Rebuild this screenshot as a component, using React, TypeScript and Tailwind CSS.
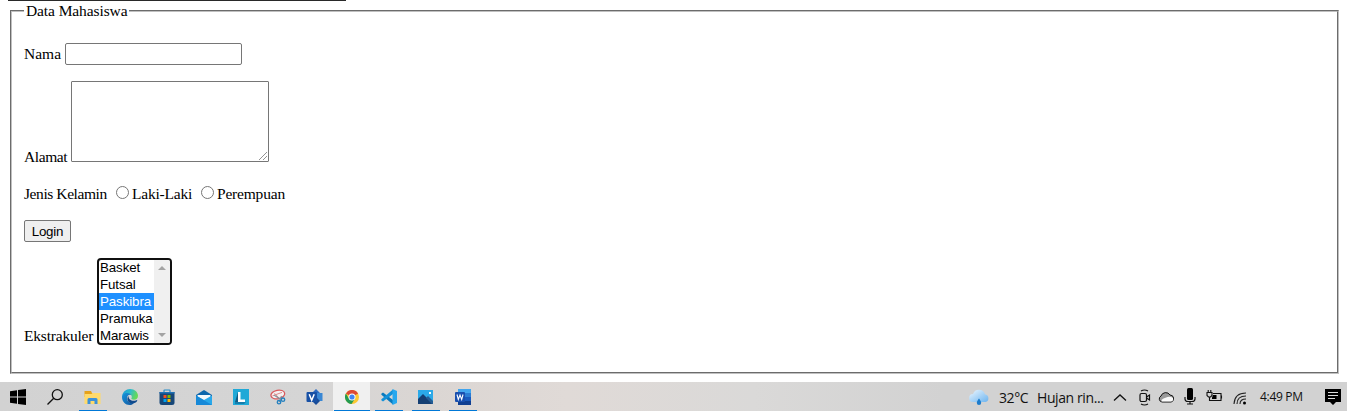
import React, { useState } from "react";

const activities = ["Basket", "Futsal", "Paskibra", "Pramuka", "Marawis"];

function Gender({ label, className }: { label: string; className: string }) {
  return (
    <label className={`flex h-[18px] items-start ${className}`}>
      <input
        type="radio"
        name="gender"
        className="mt-px mr-[3px] size-[13px] shrink-0 appearance-none rounded-full border border-[#767676] bg-white checked:border-4"
      />
      <span className="leading-[18px] tracking-[-0.2px]">{label}</span>
    </label>
  );
}

function ActivityList() {
  const [selected, setSelected] = useState("Paskibra");
  return (
    <div className="flex h-[87px] w-[75px] rounded-[4px] border-2 border-[#101010] bg-white">
      <ul role="listbox" className="-mt-px w-[55px] font-['Liberation_Sans',Arial,sans-serif] text-[13.333px] leading-[17px] tracking-[-0.1px]">
        {activities.map((name) => (
          <li
            key={name}
            role="option"
            aria-selected={name === selected}
            onClick={() => setSelected(name)}
            className={
              name === selected
                ? "h-[17px] bg-[#1e90ff] pl-px whitespace-nowrap text-white"
                : "h-[17px] pl-px whitespace-nowrap text-black"
            }
          >
            {name}
          </li>
        ))}
      </ul>
      <div className="flex flex-1 flex-col items-center justify-between rounded-r-[2px] bg-[#f0f0f0] py-[6px]">
        <svg width="8" height="4" viewBox="0 0 8 4" fill="#a3a3a3"><path d="M0 4 4 0l4 4z" /></svg>
        <svg width="8" height="4" viewBox="0 0 8 4" fill="#a3a3a3"><path d="M0 0h8L4 4z" /></svg>
      </div>
    </div>
  );
}

function Tile({ children, state = "idle" }: { children: React.ReactNode; state?: "idle" | "open" | "active" }) {
  return (
    <div className={state === "active" ? "flex h-full w-[37px] flex-col items-center bg-[#f0f0f0]" : "flex h-full w-[37px] flex-col items-center"}>
      <div className="flex h-[28px] items-center pt-[2px]">{children}</div>
      {state !== "idle" && (
        <div className={state === "active" ? "h-px w-[36px] bg-[#0078d7]" : "h-px w-[28px] bg-[#0078d7]"} />
      )}
    </div>
  );
}

function StartIcon() {
  return (
    <svg width="16" height="16" viewBox="0 0 16 16" fill="#000">
      <path d="M0 2.2 7 1.2v6.3H0zM8 1l8-1v7.5H8zM0 8.5h7v6.3l-7-1zM8 8.5h8V16l-8-1z" />
    </svg>
  );
}

function SearchIcon() {
  return (
    <svg width="16" height="16" viewBox="0 0 16 16" fill="none" stroke="#111" strokeWidth="1.3">
      <circle cx="10.3" cy="5.7" r="5" /><path d="M6.7 9.3.5 15.5" />
    </svg>
  );
}

function FolderIcon() {
  return (
    <svg width="17" height="15" viewBox="0 0 17 15">
      <path d="M.5 1h6.500l1 2h8v4H.5z" fill="#e6a21b" /><path d="M.5 4h7l1-1H16.500v11H.5z" fill="#ffda6b" />
      <path d="M3.500 14V9.500Q3.500 8 5 8h7Q13.500 8 13.500 9.500V14h-3v-3h-4v3z" fill="#3c91d9" />
    </svg>
  );
}

function EdgeIcon() {
  return (
    <svg width="16" height="16" viewBox="0 0 16 16">
      <defs>
        <linearGradient id="edgeTop" x1="0" y1="0" x2="1" y2="0.3"><stop stopColor="#1696dc" /><stop offset=".55" stopColor="#30bdc8" /><stop offset="1" stopColor="#65d957" /></linearGradient>
        <linearGradient id="edgeBottom" x1="0" y1="0" x2="1" y2="1"><stop stopColor="#1695dd" /><stop offset="1" stopColor="#12549c" /></linearGradient>
      </defs>
      <path d="M.1 7C.7 3 4 0 8 0c4.7 0 8 3.3 8 6.7 0 2.5-1.8 4-4 4-2 0-3-.8-2.6-1.4 1-1.5.1-4.3-3.2-4.3C3 5 .6 6.4.1 7z" fill="url(#edgeTop)" />
      <path d="M0 8c0-2 2.2-4 5-4 2 0 3.6.8 4.4 2C6.7 5 5 7 5 9.4c0 3.6 3.6 5.2 7.2 4C11 15 9.6 16 7.6 16 3.4 16 0 12.5 0 8z" fill="url(#edgeBottom)" />
      <path d="M6.5 7C4 9.5 5.8 15 11 14.4c2.2-.3 3.6-1.5 4.2-2.7.3-.6-.2-.8-.7-.5C10.5 13 6.4 11 6.5 7z" fill="#104a8c" />
    </svg>
  );
}

function StoreIcon() {
  return (
    <svg width="16" height="16" viewBox="0 0 16 16">
      <path d="M5 4V1.6Q5 1 5.6 1h4.8q.6 0 .6.6V4" fill="none" stroke="#258bc9" strokeWidth="1.2" />
      <path d="M.5 3h15v10.5Q15.5 16 13 16H3Q.5 16 .5 13.5z" fill="#174778" /><path d="M.5 3h15v1.5H.5z" fill="#1d70b4" />
      <path d="M4.500 6h3v3h-3z" fill="#f25022" /><path d="M8.500 6h3v3h-3z" fill="#7fba00" /><path d="M4.500 10h3v3h-3z" fill="#00a4ef" /><path d="M8.500 10h3v3h-3z" fill="#ffb900" />
    </svg>
  );
}

function MailIcon() {
  return (
    <svg width="16" height="15" viewBox="0 0 16 15">
      <path d="M0 5 8 0l8 5v10H0z" fill="#0c66ac" /><path d="M1.500 5h13v3L8 11 1.500 8z" fill="#f4f8fb" />
      <path d="M0 5.500 8 10l8-4.500V15H0z" fill="#28a8ea" /><path d="M0 5.500 16 15H0z" fill="#1689d8" />
    </svg>
  );
}

function LIcon() {
  return (
    <svg width="16" height="16" viewBox="0 0 16 16">
      <path d="M0 0h16v16H0z" fill="#20a9d7" /><path d="M5 3 2 13h3z" fill="#125b83" /><path d="M2 13h11l-2 2H2z" fill="#167eac" /><path d="M5 3h2.500v7.500H12V13H5z" fill="#fff" />
    </svg>
  );
}

function SnipIcon() {
  return (
    <svg width="17" height="16" viewBox="0 0 17 16" fill="none">
      <ellipse cx="8.8" cy="5.5" rx="7" ry="4.3" transform="rotate(-12 8.8 5.5)" fill="#f4f1f1" stroke="#d9595b" strokeWidth="1.3" />
      <path d="m3.500 6.800 9.500-3.400M5.500 4.300 10 9" stroke="#df8b8b" />
      <path d="m5 6 7.500 5M12.500 7l-2 6" stroke="#85939b" strokeWidth="1.2" />
      <circle cx="10" cy="13.200" r="1.700" stroke="#2681bf" strokeWidth="1.400" /><circle cx="14" cy="10.700" r="1.700" stroke="#2681bf" strokeWidth="1.400" />
    </svg>
  );
}

function VisioIcon() {
  return (
    <svg width="17" height="16" viewBox="0 0 17 16">
      <path d="m10 0 4 4-4 4-4-4z" fill="#2b6bc2" /><path d="M11 4h5.500v8H11z" fill="#3987d4" /><path d="m10 8 4 4-4 4-4-4z" fill="#174b98" />
      <rect x="0.500" y="3" width="10.500" height="10" rx="1" fill="#1750a5" /><path d="m3.200 5.300 2.500 6 2.500-6" fill="none" stroke="#fff" strokeWidth="1.5" />
    </svg>
  );
}

function ChromeIcon() {
  return (
    <svg width="14" height="14" viewBox="0 0 14 14">
      <circle cx="7" cy="7" r="7" fill="#fcc934" /><path d="M7 7 .9 3.500A7 7 0 0 1 13.100 3.500z" fill="#de4936" />
      <path d="M.9 3.500A7 7 0 0 0 6.500 14L10 8.800H4z" fill="#249b51" /><circle cx="7" cy="7" r="3.500" fill="#fff" /><circle cx="7" cy="7" r="2.600" fill="#4285f4" />
    </svg>
  );
}

function CodeIcon() {
  return (
    <svg width="16" height="16" viewBox="0 0 16 16">
      <path d="M.3 4.800 2 3.500 12 11v4.500L.4 5.700z" fill="#087abf" /><path d="M.3 11.200 2 12.500 12 5V.5L.4 10.300z" fill="#1491d8" />
      <path d="m11.500 0 4.500 2v12l-4.500 2z" fill="#28a8ee" />
    </svg>
  );
}

function PhotosIcon() {
  return (
    <svg width="15" height="14" viewBox="0 0 15 14">
      <path d="M0 0h15v14H0z" fill="#2ba9e8" /><path d="M0 9 5 4l10 10H0z" fill="#153f73" /><path d="m8 8 2-2 5 5v3h-1z" fill="#245d95" /><path d="M11 2h2v2h-2z" fill="#f5fbff" />
    </svg>
  );
}

function WordIcon() {
  return (
    <svg width="16" height="16" viewBox="0 0 16 16">
      <path d="M3 0h13v4H3z" fill="#41a5ee" /><path d="M3 4h13v4H3z" fill="#2b7cd3" /><path d="M3 8h13v4H3z" fill="#185abd" /><path d="M3 12h13v4H3z" fill="#103f91" />
      <rect y="3" width="10" height="10" rx="1" fill="#194fae" /><path d="m2 5.500 1.300 5L5 6l1.700 4.500L8 5.500" fill="none" stroke="#fff" strokeWidth="1.1" />
    </svg>
  );
}

function WeatherIcon() {
  return (
    <svg width="21" height="17" viewBox="0 0 21 17">
      <defs><linearGradient id="cloud" x1="0" y1="0" x2="1" y2="1"><stop stopColor="#edf7ff" /><stop offset="1" stopColor="#6cb4ef" /></linearGradient></defs>
      <path d="M4.300 13A4 4 0 0 1 4 5 6.300 6.300 0 0 1 16 5.200 4 4 0 0 1 16.500 13z" fill="url(#cloud)" />
      <path d="M10 9.500c1 1.500 2.200 3 2.200 4.200a2.200 2.200 0 0 1-4.400 0C7.800 12.500 9 11 10 9.500z" fill="#1c7ccc" />
    </svg>
  );
}

function Taskbar() {
  return (
    <footer className="flex h-[29px] items-center bg-[linear-gradient(90deg,#d2d2d2_0%,#d5d5d5_23%,#dbd6d3_32%,#e0dad7_42%,#dad9d8_56%,#d2d2d2_70%)] font-['Open_Sans','Noto_Sans',sans-serif] text-[#111]">
      <nav className="flex h-full">
        <div className="-ml-px flex h-full w-[75px]"><Tile><StartIcon /></Tile><Tile><SearchIcon /></Tile></div>
        <Tile state="open"><FolderIcon /></Tile>
        <Tile><EdgeIcon /></Tile>
        <Tile><StoreIcon /></Tile>
        <Tile><MailIcon /></Tile>
        <Tile><LIcon /></Tile>
        <Tile><SnipIcon /></Tile>
        <Tile><VisioIcon /></Tile>
        <Tile state="active"><ChromeIcon /></Tile>
        <Tile state="open"><CodeIcon /></Tile>
        <Tile state="open"><PhotosIcon /></Tile>
        <Tile state="open"><WordIcon /></Tile>
      </nav>
      <div className="ml-[488px] flex h-full items-center pt-[2px]">
        <WeatherIcon />
        <span className="ml-[9px] w-[38px] text-[14px] tracking-[-0.4px] whitespace-nowrap">32°C</span>
        <span className="w-[77px] text-[14px] tracking-[-0.4px] whitespace-nowrap">Hujan rin...</span>
        <svg className="-ml-px" width="14" height="10" viewBox="0 0 14 10" fill="none" stroke="#111" strokeWidth="1.3"><path d="M1 7.500 7 2l6 5.500" /></svg>
        <svg className="ml-[11px]" width="13" height="17" viewBox="0 0 13 17" fill="none" stroke="#111" strokeWidth="1.2">
          <rect x="2" y="4.500" width="6.500" height="8" rx="1.500" /><path d="m8.500 8 3-2v5l-3-2M3 2q3.500-2 7 0M3 15q3.500 2 7 0" />
        </svg>
        <svg className="ml-[7px] -translate-y-px" width="17" height="12" viewBox="0 0 17 12" stroke="#111">
          <path d="M4 11A3.200 3.200 0 0 1 3 5 5 5 0 0 1 12 4a3.600 3.600 0 0 1 1.200 7z" fill="#999" />
          <path d="M3.500 10.500Q3 8.500 5.500 7.500l4-1.500q3-.8 5.500 1 .8 3-2 3.500z" fill="#fafafa" stroke="none" />
        </svg>
        <svg className="ml-[9px] -translate-y-px" width="12" height="17" viewBox="0 0 12 17" fill="none" stroke="#111" strokeWidth="1.2">
          <rect x="3" y="0" width="6" height="12" rx="1.5" fill="#000" stroke="none" /><path d="M1 9v2q0 2.500 3 2.500h4q3 0 3-2.500V9M6 13v3M3 16h6" />
        </svg>
        <svg className="ml-[10px] -translate-y-px" width="17" height="13" viewBox="0 0 17 13" fill="none" stroke="#111" strokeWidth="1.1">
          <path d="M7 3.500h8v7H4.500M15.500 5.500v3M1 2.500h5v3L4.500 7h-2L1 5.500zM2.200 0v2M4.800 0v2M3.500 7v3.500H5" /><path d="M7 5h3.500v4H6V7.500z" fill="#000" stroke="none" />
        </svg>
        <svg className="ml-[10px]" width="15" height="14" viewBox="0 0 15 14" fill="none" stroke="#222" strokeWidth="1.1">
          <path d="M1 13Q1.500 2 13 2M4 13Q4 5 13 5M7 13q0-5 6-5" /><circle cx="11.500" cy="12" r="1.5" fill="#000" stroke="none" />
        </svg>
        <span className="ml-[12px] w-[65px] -translate-y-px text-[12px] tracking-[-0.3px] whitespace-nowrap">4:49 PM</span>
        <svg className="-translate-y-px" width="16" height="16" viewBox="0 0 16 16"><path d="M0 0h16v13h-5l-3 3-3-3H0z" fill="#000" /><path d="M3 3.500h10M3 6.500h10M3 9.500h7" stroke="#ddd" strokeWidth="1" /></svg>
      </div>
    </footer>
  );
}

export default function App() {
  return (
    <div className="flex h-[411px] w-[1347px] flex-col overflow-hidden bg-white text-black">
      <div className="ml-[8px] h-px w-[338px] shrink-0 bg-[#292929]" />
      <form className="h-[381px] shrink-0 pt-px pl-[10px] font-['Liberation_Serif','Times_New_Roman',serif] text-[16px] leading-[18px]" onSubmit={(e) => e.preventDefault()}>
        <fieldset className="h-[372px] w-[1329px] border-2 border-[#c0c0c0] px-[12px] [border-style:groove]">
          <legend className="h-[18px] w-[105px] px-[2px] text-[15.5px] leading-[18px] tracking-[-0.1px] whitespace-nowrap">Data Mahasiswa</legend>
          <div className="flex flex-col text-[15.5px]">
            <label className="mt-[23px] flex h-[22px] items-center">
              <span className="w-[41px]">Nama</span>
              <input className="h-[22px] w-[177px] rounded-[2px] border border-[#767676] bg-white px-px font-['Liberation_Sans',Arial,sans-serif] text-[13.333px] outline-none" />
            </label>
            <label className="mt-[16px] flex h-[81px] items-end">
              <span className="w-[47px] translate-y-[4px] tracking-[-0.4px]">Alamat</span>
              <span className="relative h-[81px] w-[198px]">
                <textarea className="block h-[81px] w-[198px] resize-none rounded-[1px] border border-[#767676] bg-white p-[2px] font-['Liberation_Mono',monospace] text-[13.333px] outline-none" />
                <svg className="absolute right-[2px] bottom-[2px]" width="8" height="8" viewBox="0 0 8 8" fill="none" stroke="#777" strokeWidth="0.8"><path d="M0 8 8 0M4 8l4-4" /></svg>
              </span>
            </label>
            <div className="mt-[23px] flex h-[18px]">
              <span className="w-[92px] tracking-[-0.42px] whitespace-nowrap">Jenis Kelamin</span>
              <Gender label="Laki-Laki" className="w-[85px]" />
              <Gender label="Perempuan" className="w-[90px]" />
            </div>
            <button className="mt-[17px] h-[22px] w-[47px] rounded-[2px] border border-[#767676] bg-[#efefef] pt-px font-['Liberation_Sans',Arial,sans-serif] text-[13.333px] leading-[20px] tracking-[-0.2px]">Login</button>
            <div className="mt-[16px] flex h-[87px] items-end">
              <span className="w-[73px] tracking-[-0.2px]">Ekstrakuler</span>
              <ActivityList />
            </div>
          </div>
        </fieldset>
      </form>
      <Taskbar />
    </div>
  );
}
